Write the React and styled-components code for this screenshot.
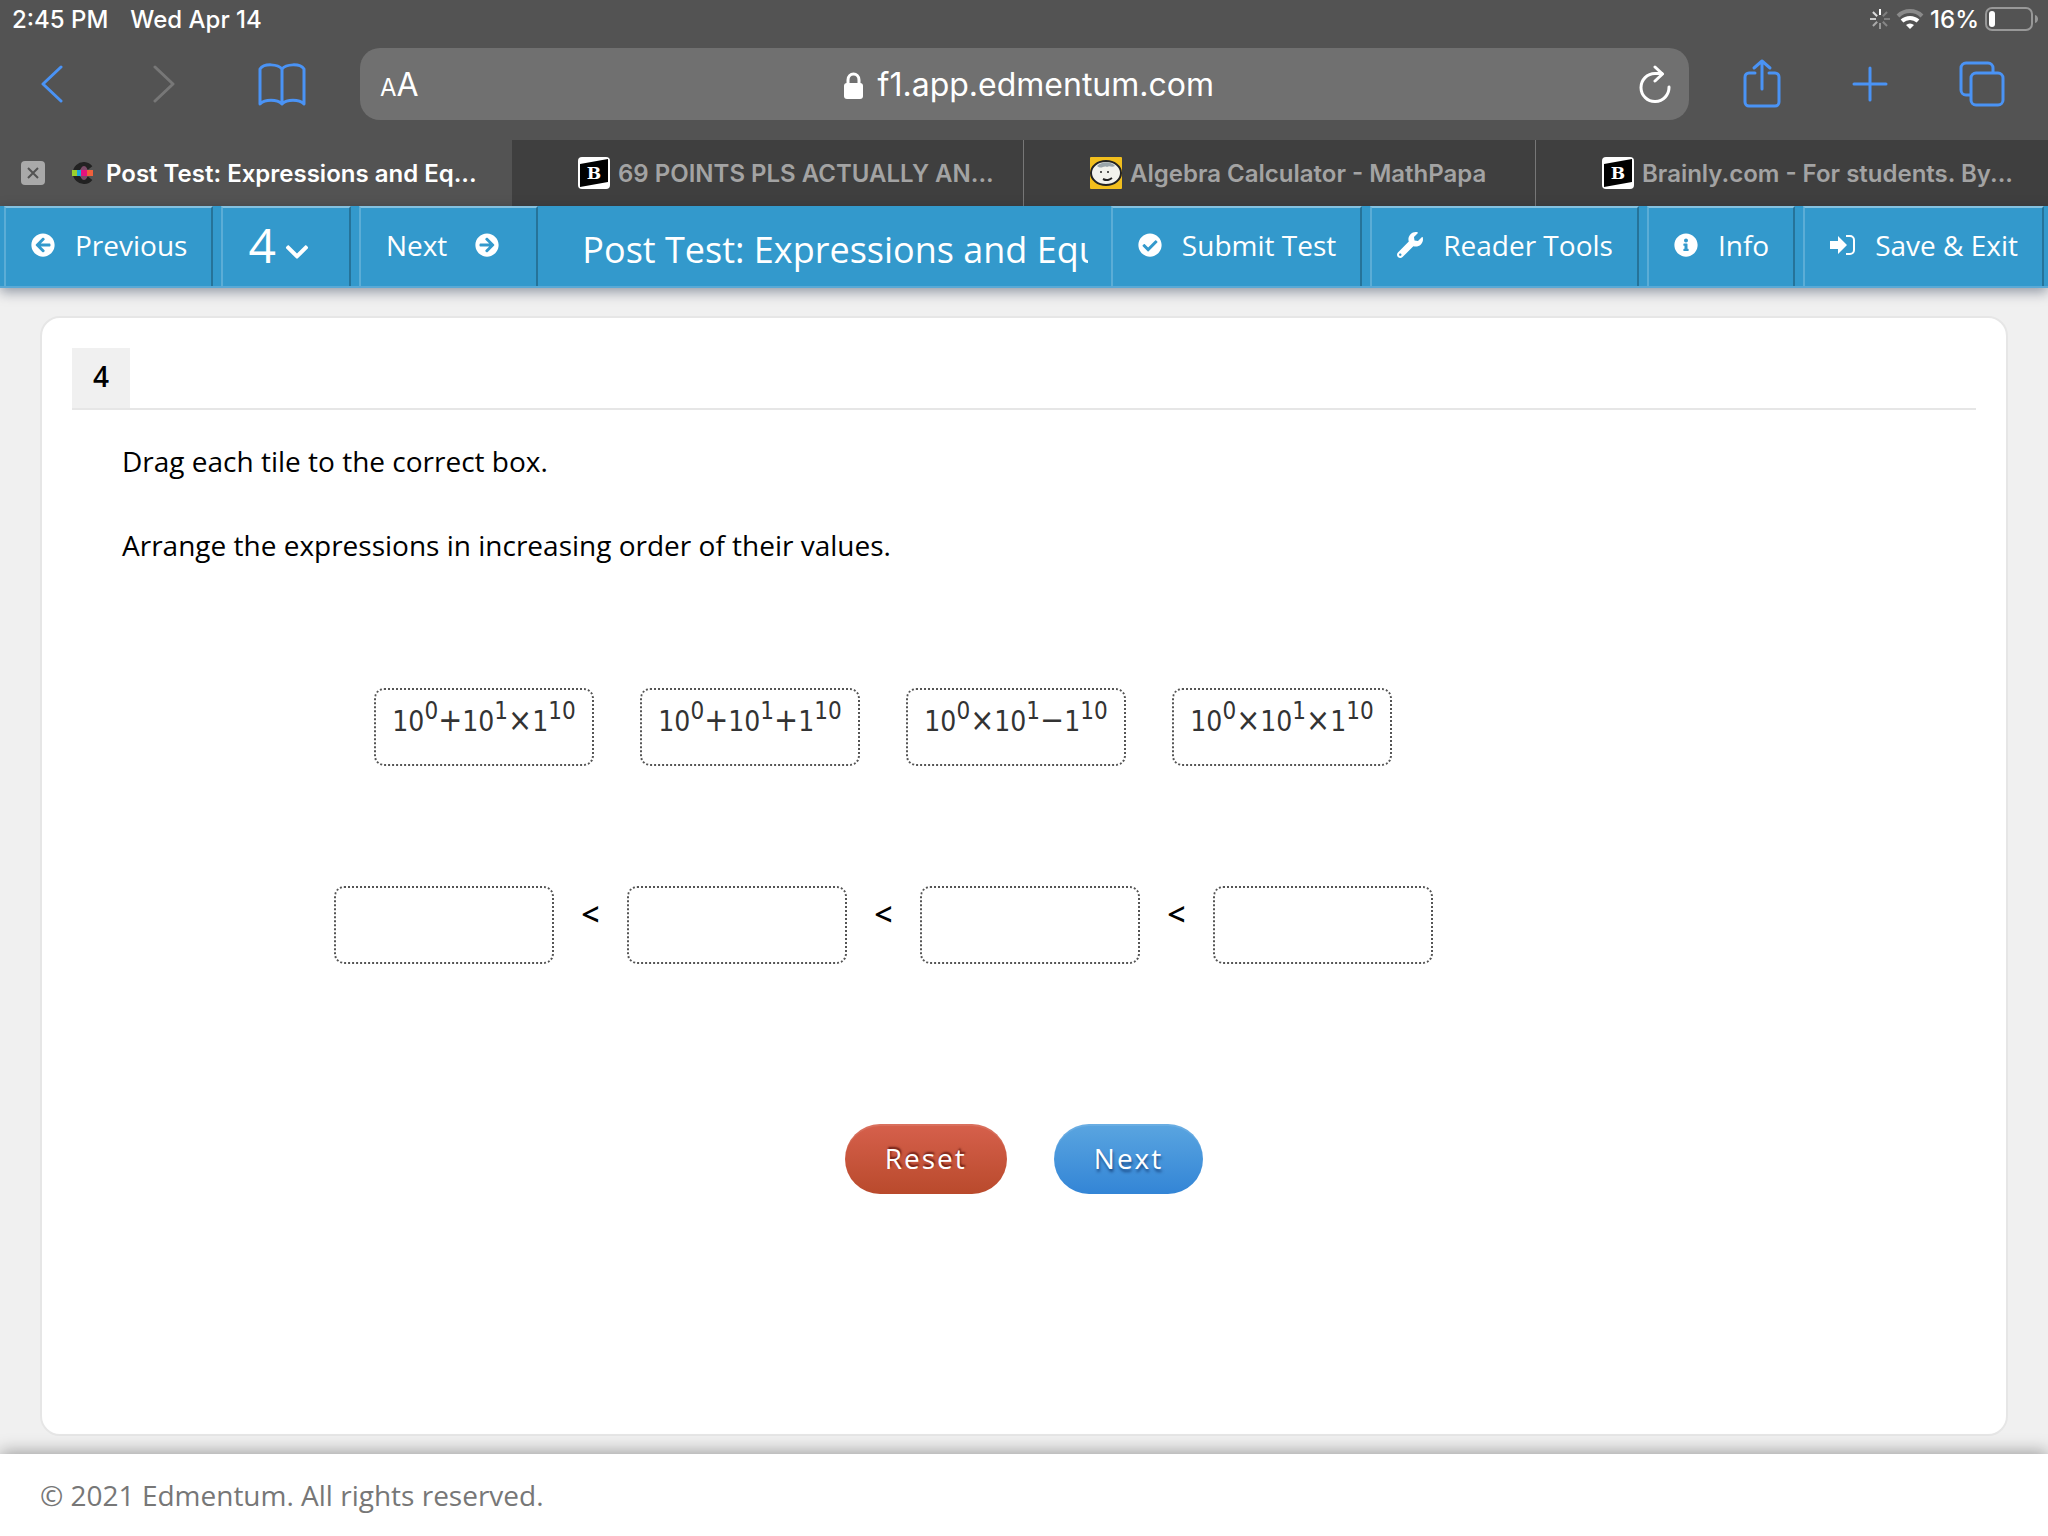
import React from 'react';
import styled, { createGlobalStyle } from 'styled-components';
import { FaArrowCircleLeft, FaArrowCircleRight, FaCheckCircle, FaChevronDown, FaInfoCircle, FaWrench } from 'react-icons/fa';

const GlobalStyle = createGlobalStyle`
	* {
		box-sizing: border-box;
	}

	body {
		margin: 0;
		background-color: #f0f0f0;
		font-family: 'Open Sans', sans-serif;
	}

	button {
		padding: 0;
		border: none;
		background: none;
		font-family: inherit;
		cursor: pointer;
	}

	svg {
		display: block;
		flex-shrink: 0;
	}
`

const Page = styled.div`
	min-height: 100vh;
	display: flex;
	flex-direction: column;
`

const Browser = styled.header`
	background-color: #535353;
	font-family: Inter, sans-serif;
	color: white;
`

const StatusBar = styled.div`
	height: 40px;
	padding: 0 9px 2px 12px;
	display: flex;
	align-items: center;
	gap: 22px;
	font-size: 24px;
	font-weight: 500;
`

const StatusIcons = styled.div`
	margin-left: auto;
	display: flex;
	align-items: center;
	gap: 6px;
`

const NavBar = styled.div`
	height: 100px;
	padding: 8px 43px 20px 34px;
	display: flex;
	align-items: center;
	justify-content: space-between;
`

const NavGroup = styled.div`
	display: flex;
	align-items: center;
	gap: ${props => props.$gap};
`

const NavButton = styled.button`
	display: flex;
	color: ${props => props.disabled ? '#777777' : '#4a93f5'};
`

const AddressBar = styled.div`
	flex: 1;
	height: 72px;
	margin: 0 54px;
	padding: 0 18px 0 20px;
	border-radius: 20px;
	background-color: #707070;
	display: flex;
	align-items: center;
	justify-content: space-between;
`

const TextSize = styled.button`
	padding-top: 4px;
	color: white;
	font-size: 32px;
	line-height: 40px;
`

const SmallA = styled.span`
	font-size: 24px;
`

const Address = styled.div`
	padding-top: 2px;
	display: flex;
	align-items: center;
	gap: 15px;
	font-size: 32px;
	line-height: 40px;
`

const Reload = styled.button`
	color: white;
`

const Tabs = styled.nav`
	height: 66px;
	display: grid;
	grid-template-columns: repeat(4, 1fr);
`

const Tab = styled.div`
	min-width: 0;
	padding-left: ${props => props.$active ? '21px' : '66px'};
	display: flex;
	align-items: center;
	background-color: ${props => props.$active ? '#535353' : '#3f3f3f'};
	border-right: ${props => props.$active ? 'none' : '1px solid #777777'};

	&:last-child {
		border-right: none;
	}
`

const CloseTab = styled.button`
	width: 24px;
	height: 24px;
	margin-right: 27px;
	border-radius: 4px;
	background-color: #a9a9a9;
	color: #535353;
	display: flex;
	align-items: center;
	justify-content: center;
`

const TabLink = styled.a`
	min-width: 0;
	display: flex;
	align-items: center;
	gap: ${props => props.$active ? '12px' : '8px'};
	color: ${props => props.$active ? 'white' : '#a3a3a3'};
	font-size: 24px;
	font-weight: 600;
	white-space: nowrap;
	text-decoration: none;
`

const Toolbar = styled.div`
	height: 82px;
	padding: 0 4px;
	display: flex;
	gap: 8px;
	background-color: #3399cc;
	border-bottom: 2px solid #5aa9d6;
	box-shadow: 0 4px 12px rgba(0, 20, 50, 0.4);
`

const ToolButton = styled.button`
	padding: 0 24px 4px 25px;
	display: flex;
	align-items: center;
	gap: ${props => props.$gap || '20px'};
	border-top: 2px solid #84c1e0;
	border-left: 2px solid #5badd6;
	border-right: 2px solid #267399;
	color: white;
	font-size: 28px;
	line-height: 40px;
	white-space: nowrap;
`

const QuestionPicker = styled(ToolButton)`
	padding-right: 39px;
	font-size: 48px;

	svg {
		margin-top: 14px;
	}
`

const NextButton = styled(ToolButton)`
	padding-right: 37px;
`

const TestTitle = styled.h1`
	flex: 1;
	min-width: 0;
	margin: 4px 15px 0 36px;
	color: white;
	font-size: 36px;
	font-weight: 400;
	line-height: 80px;
	white-space: nowrap;
	overflow: hidden;
`

const Main = styled.main`
	flex: 1;
	padding: 28px 40px 18px;
	display: flex;
`

const Card = styled.section`
	flex: 1;
	padding: 30px;
	border: 2px solid #e6e6e6;
	border-radius: 20px;
	background-color: white;
`

const QuestionHeader = styled.div`
	display: flex;
	border-bottom: 2px solid #e6e6e6;
`

const QuestionNumber = styled.h2`
	width: 58px;
	margin: 0;
	padding-bottom: 4px;
	background-color: #f0f0f0;
	font-size: 28px;
	font-weight: 600;
	line-height: 56px;
	text-align: center;
`

const Instructions = styled.div`
	padding: 30px 50px 0;
	font-size: 28px;
	line-height: 42px;

	p {
		margin: 0 0 42px;
	}
`

const Row = styled.div`
	display: flex;
	margin-top: ${props => props.$top};
	padding-left: ${props => props.$indent};
	gap: ${props => props.$gap};
`

const Slot = styled.div`
	width: 220px;
	height: 78px;
	border: 2px dotted #555555;
	border-radius: 10px;
`

const Tile = styled(Slot)`
	padding-top: 8px;
	color: #333333;
	font-family: 'DejaVu Sans Condensed', 'Noto Sans', sans-serif;
	font-size: 28px;
	line-height: 48px;
	text-align: center;
	white-space: nowrap;
	cursor: move;

	sup {
		font-size: 24px;
		line-height: 0;
		vertical-align: 12px;
	}
`

const Operator = styled.span`
	font-size: 32px;
	line-height: 0;
`

const LessThan = styled.span`
	width: 73px;
	font-size: 32px;
	font-weight: 600;
	line-height: 56px;
	text-align: center;
`

const Actions = styled.div`
	margin-top: 160px;
	display: flex;
	justify-content: center;
	gap: 47px;
`

const Action = styled.button`
	height: 70px;
	padding: 0 40px 2px;
	border-radius: 35px;
	background: ${props => props.$reset ? 'linear-gradient(#d6604c, #b94a2c)' : 'linear-gradient(#5aa5e0, #3385d6)'};
	box-shadow: inset 0 2px 0 rgba(255, 255, 255, 0.1);
	color: white;
	font-size: 28px;
	font-weight: 500;
	letter-spacing: 2px;
	text-shadow: ${props => props.$reset ? '1px -2px 2px rgba(60, 0, 0, 0.7)' : '1px 3px 3px rgba(0, 30, 80, 0.6)'};
`

const Footer = styled.footer`
	height: 82px;
	padding: 0 40px;
	background-color: white;
	box-shadow: 0 -2px 16px rgba(0, 0, 0, 0.35);
	color: #777777;
	font-size: 28px;
	line-height: 82px;
`

const Spinner = () => (
	<svg width='20' height='20' viewBox='0 0 20 20' stroke='white' strokeWidth='2'>
		{[1, 0.25, 0.25, 0.3, 0.4, 0.5, 0.7, 0.8].map((opacity, i) => (
			<path key={i} d='M10 0v6' opacity={opacity} transform={`rotate(${i * 45} 10 10)`} />
		))}
	</svg>
)

const Wifi = () => (
	<svg width='28' height='20' viewBox='0 0 28 20' fill='none' strokeWidth='4'>
		<path d='M2 7a17 17 0 0 1 24 0' stroke='#8a8a8a' />
		<path d='M6 12a12 12 0 0 1 16 0' stroke='white' />
		<path d='M14 20l-4-4a6 6 0 0 1 8 0z' fill='white' />
	</svg>
)

const Battery = () => (
	<svg width='54' height='24' viewBox='0 0 54 24'>
		<rect x='1' y='1' width='46' height='22' rx='6' fill='none' stroke='#989898' strokeWidth='2' />
		<rect x='4' y='4' width='6' height='16' rx='3' fill='white' />
		<path d='M50 8c4 1 4 7 0 8z' fill='#989898' />
	</svg>
)

const Chevron = ({ right }) => (
	<svg width='29' height='38' viewBox='-7 0 29 38' fill='none' stroke='currentColor' strokeWidth='3' strokeLinecap='round' strokeLinejoin='round'>
		<path d={right ? 'M2 2l18 17L2 36' : 'M20 2L2 19l18 17'} />
	</svg>
)

const Book = () => (
	<svg width='48' height='44' viewBox='0 0 48 44' fill='none' stroke='currentColor' strokeWidth='3' strokeLinejoin='round'>
		<path d='M24 7C20 2 6 1 2 7v35c5-5 17-5 22 0 5-5 17-5 22 0V7c-4-6-18-5-22 0zM24 7v35' />
	</svg>
)

const Lock = () => (
	<svg width='19' height='27' viewBox='0 0 19 27'>
		<path d='M4 13V8c0-8 11-8 11 0v5' fill='none' stroke='white' strokeWidth='3' />
		<rect y='11' width='19' height='16' rx='3' fill='white' />
	</svg>
)

const ReloadIcon = () => (
	<svg width='32' height='38' viewBox='0 0 32 38' fill='none' stroke='currentColor' strokeWidth='3' strokeLinecap='round' strokeLinejoin='round'>
		<path d='M30 22A14 14 0 1 1 16 8.500h7' />
		<path d='M16 2l7.500 7L16 16' />
	</svg>
)

const Share = () => (
	<svg width='38' height='50' viewBox='0 0 38 50' fill='none' stroke='currentColor' strokeWidth='3' strokeLinecap='round' strokeLinejoin='round'>
		<path d='M12 14H6a4 4 0 0 0-4 4v25a4 4 0 0 0 4 4h26a4 4 0 0 0 4-4V18a4 4 0 0 0-4-4h-6' />
		<path d='M19 30V2M11 9l8-7 8 7' />
	</svg>
)

const Plus = () => (
	<svg width='36' height='36' viewBox='0 0 36 36' stroke='currentColor' strokeWidth='3' strokeLinecap='round'>
		<path d='M18 2v32M2 18h32' />
	</svg>
)

const Pages = () => (
	<svg width='46' height='46' viewBox='0 0 46 46' fill='none' stroke='currentColor' strokeWidth='3'>
		<rect x='12' y='12' width='32' height='32' rx='5' />
		<path d='M12 34H7a5 5 0 0 1-5-5V7a5 5 0 0 1 5-5h22a5 5 0 0 1 5 5v5' />
	</svg>
)

const Cross = () => (
	<svg width='12' height='12' viewBox='0 0 12 12' stroke='currentColor' strokeWidth='2'>
		<path d='M1 1l10 10M11 1L1 11' />
	</svg>
)

const EdmentumIcon = () => (
	<svg width='22' height='24' viewBox='0 0 22 24'>
		<path d='M18 7a8 8 0 1 0 0 10' fill='none' stroke='#222222' strokeWidth='6' />
		<ellipse cx='12' cy='12' rx='4' ry='7' fill='#7c4a68' />
		<path d='M0 9h6v6H0z' fill='#9ad02c' />
		<path d='M5 9h5v6H5z' fill='#1ba8d8' />
		<path d='M9 9h6v6H9z' fill='#e5127d' />
		<path d='M15 9h6v6h-6z' fill='#f0603c' />
	</svg>
)

const BrainlyIcon = () => (
	<svg width='32' height='32' viewBox='0 0 32 32'>
		<rect width='32' height='32' rx='4' fill='white' />
		<path d='M2 7l28-5v23L2 30z' fill='black' />
		<text x='16' y='22' fill='white' fontFamily='DejaVu Serif, serif' fontSize='17' fontWeight='700' textAnchor='middle'>B</text>
	</svg>
)

const MathPapaIcon = () => (
	<svg width='32' height='32' viewBox='0 0 32 32'>
		<rect width='32' height='32' rx='1' fill='#f2bf1d' />
		<ellipse cx='16' cy='16' rx='15' ry='12' fill='#f2f2ec' stroke='#222222' strokeWidth='2' />
		<path d='M7 9c5-5 14-5 18 0-4 2-5-1-8 1-4-2-5 3-10-1z' fill='#9aa5aa' />
		<circle cx='11' cy='15' r='1' fill='#222222' />
		<circle cx='18' cy='15' r='1' fill='#222222' />
		<path d='M13 22c4 2 6 1 9-1' fill='none' stroke='#222222' strokeWidth='2' />
	</svg>
)

const ExitIcon = () => (
	<svg width='25' height='20' viewBox='0 0 25 20'>
		<path d='M0 6h8V1l9 9-9 9v-5H0z' fill='white' />
		<path d='M16 1h4a4 4 0 0 1 4 4v10a4 4 0 0 1-4 4h-4' fill='none' stroke='white' strokeWidth='2' />
	</svg>
)

const tabs = [
	{ icon: <BrainlyIcon />, title: '69 POINTS PLS ACTUALLY AN...' },
	{ icon: <MathPapaIcon />, title: 'Algebra Calculator - MathPapa' },
	{ icon: <BrainlyIcon />, title: 'Brainly.com - For students. By...' },
];

const tiles = [['+', '×'], ['+', '+'], ['×', '−'], ['×', '×']];

const App = () => {
	return (
		<Page>
			<GlobalStyle />
			<Browser>
				<StatusBar>
					<span>2:45 PM</span>
					<span>Wed Apr 14</span>
					<StatusIcons>
						<Spinner />
						<Wifi />
						<span>16%</span>
						<Battery />
					</StatusIcons>
				</StatusBar>
				<NavBar>
					<NavGroup $gap='83px'>
						<NavButton aria-label='Back'><Chevron /></NavButton>
						<NavButton aria-label='Forward' disabled><Chevron right /></NavButton>
						<NavButton aria-label='Bookmarks'><Book /></NavButton>
					</NavGroup>
					<AddressBar>
						<TextSize aria-label='Text size'><SmallA>A</SmallA>A</TextSize>
						<Address><Lock />f1.app.edmentum.com</Address>
						<Reload aria-label='Reload'><ReloadIcon /></Reload>
					</AddressBar>
					<NavGroup $gap='71px'>
						<NavButton aria-label='Share'><Share /></NavButton>
						<NavButton aria-label='New tab'><Plus /></NavButton>
						<NavButton aria-label='All tabs'><Pages /></NavButton>
					</NavGroup>
				</NavBar>
				<Tabs>
					<Tab $active>
						<CloseTab aria-label='Close tab'><Cross /></CloseTab>
						<TabLink href='#' $active><EdmentumIcon />Post Test: Expressions and Eq...</TabLink>
					</Tab>
					{tabs.map(tab => (
						<Tab key={tab.title}>
							<TabLink href='#'>{tab.icon}{tab.title}</TabLink>
						</Tab>
					))}
				</Tabs>
			</Browser>
			<Toolbar>
				<ToolButton><FaArrowCircleLeft size={24} />Previous</ToolButton>
				<QuestionPicker $gap='8px'>4<FaChevronDown size={26} /></QuestionPicker>
				<NextButton $gap='28px'>Next<FaArrowCircleRight size={24} /></NextButton>
				<TestTitle>Post Test: Expressions and Equations</TestTitle>
				<ToolButton><FaCheckCircle size={24} />Submit Test</ToolButton>
				<ToolButton><FaWrench size={26} />Reader Tools</ToolButton>
				<ToolButton><FaInfoCircle size={24} />Info</ToolButton>
				<ToolButton><ExitIcon />Save &amp; Exit</ToolButton>
			</Toolbar>
			<Main>
				<Card>
					<QuestionHeader>
						<QuestionNumber>4</QuestionNumber>
					</QuestionHeader>
					<Instructions>
						<p>Drag each tile to the correct box.</p>
						<p>Arrange the expressions in increasing order of their values.</p>
					</Instructions>
					<Row $top='122px' $indent='302px' $gap='46px'>
						{tiles.map(([first, second]) => (
							<Tile key={first + second}>
								10<sup>0</sup><Operator>{first}</Operator>10<sup>1</sup><Operator>{second}</Operator>1<sup>10</sup>
							</Tile>
						))}
					</Row>
					<Row $top='120px' $indent='262px'>
						<Slot />
						<LessThan>&lt;</LessThan>
						<Slot />
						<LessThan>&lt;</LessThan>
						<Slot />
						<LessThan>&lt;</LessThan>
						<Slot />
					</Row>
					<Actions>
						<Action $reset>Reset</Action>
						<Action>Next</Action>
					</Actions>
				</Card>
			</Main>
			<Footer>© 2021 Edmentum. All rights reserved.</Footer>
		</Page>
	);
}

export default App;
